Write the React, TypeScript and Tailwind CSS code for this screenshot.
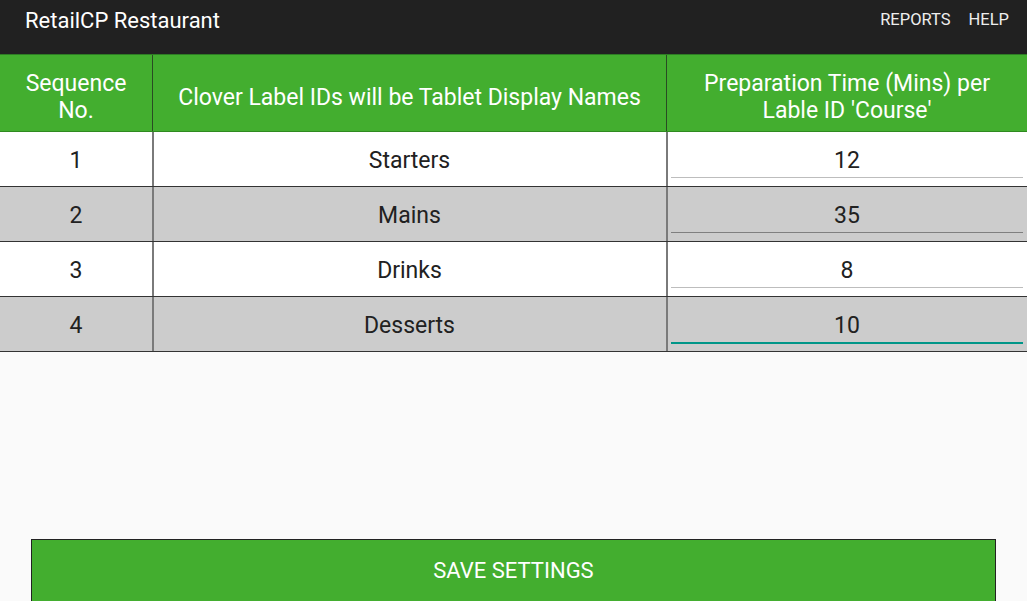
import React from "react";

const rows = [
  { n: "1", name: "Starters", time: "12" },
  { n: "2", name: "Mains", time: "35" },
  { n: "3", name: "Drinks", time: "8" },
  { n: "4", name: "Desserts", time: "10" },
];

export default function App() {
  return (
    <div
      className="w-[1027px] h-[601px] bg-[#fafafa] flex flex-col overflow-hidden"
      style={{ fontFamily: "Roboto, 'Noto Sans', sans-serif" }}
    >
      <div className="h-[54px] bg-[#212121] flex items-center justify-between pl-[25px] pr-[18px] shrink-0">
        <div className="text-white text-[22px] -mt-[14px]">RetailCP Restaurant</div>
        <div className="flex gap-[18px] text-[16.5px] text-[#eeeeee] -mt-[14px]">
          <span>REPORTS</span>
          <span>HELP</span>
        </div>
      </div>
      <div className="grid grid-cols-[152px_1px_513px_1px_360px] h-[77px] bg-[#43ae2f] text-white text-[23px] leading-[27px] shrink-0 border-t border-[#2e7d24]">
        <div className="flex items-center justify-center text-center pt-[8px]">
          Sequence
          <br />
          No.
        </div>
        <div className="bg-[#2a4a24]" />
        <div className="flex items-center justify-center text-center pt-[8px]">
          Clover Label IDs will be Tablet Display Names
        </div>
        <div className="bg-[#2a4a24]" />
        <div className="flex items-center justify-center text-center pt-[8px]">
          Preparation Time (Mins) per
          <br />
          Lable ID 'Course'
        </div>
      </div>
      <div className="h-[1px] bg-[#2f8a20] shrink-0" />
      {rows.map((r, i) => {
        const grey = i % 2 === 1;
        const focused = i === 3;
        return (
          <div
            key={r.n}
            className={`grid grid-cols-[152px_1px_513px_1px_360px] h-[55px] text-[23px] leading-[27px] text-[#212121] border-b border-[#333333] shrink-0 overflow-hidden ${
              grey ? "bg-[#cccccc]" : "bg-white"
            }`}
          >
            <div className="flex items-center justify-center pt-[3px]">{r.n}</div>
            <div className="bg-[#7a7a7a] w-[2px]" />
            <div className="flex items-center justify-center pt-[3px]">{r.name}</div>
            <div className="bg-[#7a7a7a] w-[2px]" />
            <div className="flex flex-col px-[4px] pt-[15px]">
              <div className="h-[27px] text-center">{r.time}</div>
              <div
                className={`mt-[3px] ${
                  focused
                    ? "h-[2px] bg-[#009688]"
                    : grey
                    ? "h-[1px] bg-[#7f7f7f]"
                    : "h-[1px] bg-[#bdbdbd]"
                }`}
              />
            </div>
          </div>
        );
      })}
      <div className="flex-1" />
      <div className="px-[31px] shrink-0">
        <div className="h-[62px] bg-[#43ae2f] border border-[#222222] border-b-0 flex items-center justify-center text-white text-[22px]">
          SAVE SETTINGS
        </div>
      </div>
    </div>
  );
}
